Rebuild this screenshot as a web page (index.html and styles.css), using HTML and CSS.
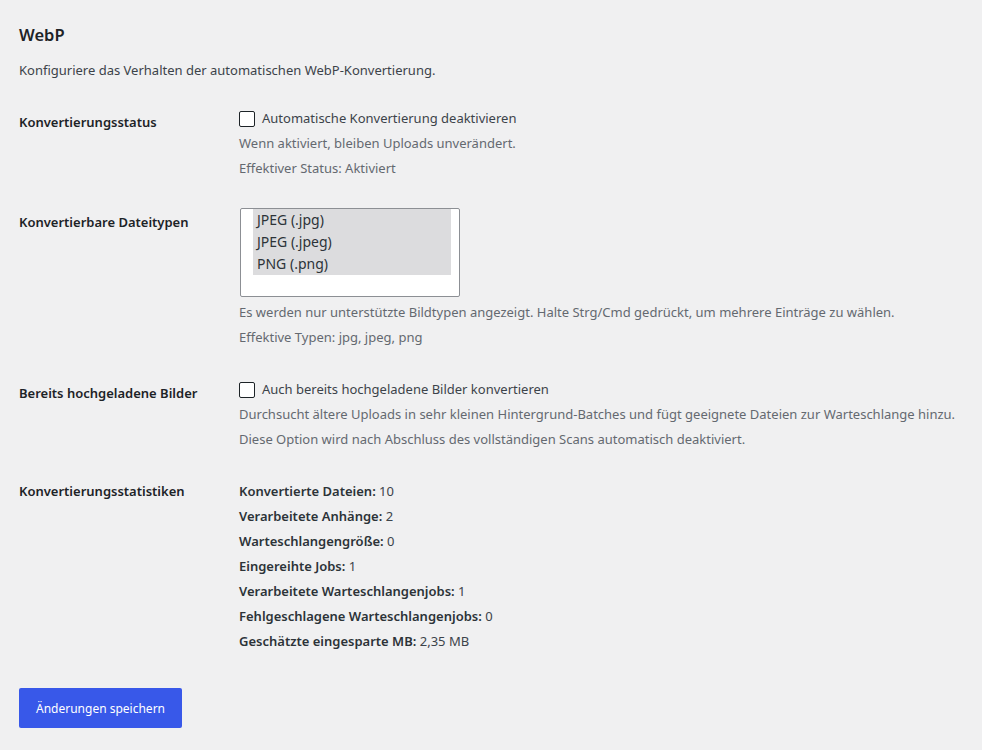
FILE: index.html
```html
<!DOCTYPE html>
<html lang="de">
<head>
    <meta charset="UTF-8">
    <meta name="viewport" content="width=device-width, initial-scale=1.0">
    <title>WebP Einstellungen</title>
    <link rel="stylesheet" href="styles.css">
</head>
<body>
    <div class="wrap">
        <h2>WebP</h2>
        <p class="intro">Konfiguriere das Verhalten der automatischen WebP-Konvertierung.</p>

        <form class="settings">
            <!-- Status -->
            <div class="row">
                <div class="label label-check">Konvertierungsstatus</div>
                <div class="field">
                    <label class="check"><input type="checkbox"> Automatische Konvertierung deaktivieren</label>
                    <p class="description">Wenn aktiviert, bleiben Uploads unverändert.</p>
                    <p class="description">Effektiver Status: Aktiviert</p>
                </div>
            </div>

            <!-- Dateitypen -->
            <div class="row">
                <div class="label label-select">Konvertierbare Dateitypen</div>
                <div class="field">
                    <div class="listbox" role="listbox" aria-multiselectable="true">
                        <div class="option selected" role="option">JPEG (.jpg)</div>
                        <div class="option selected" role="option">JPEG (.jpeg)</div>
                        <div class="option selected" role="option">PNG (.png)</div>
                    </div>
                    <p class="description">Es werden nur unterstützte Bildtypen angezeigt. Halte Strg/Cmd gedrückt, um mehrere Einträge zu wählen.</p>
                    <p class="description">Effektive Typen: jpg, jpeg, png</p>
                </div>
            </div>

            <!-- Bestehende Bilder -->
            <div class="row">
                <div class="label label-check">Bereits hochgeladene Bilder</div>
                <div class="field">
                    <label class="check"><input type="checkbox"> Auch bereits hochgeladene Bilder konvertieren</label>
                    <p class="description">Durchsucht ältere Uploads in sehr kleinen Hintergrund-Batches und fügt geeignete Dateien zur Warteschlange hinzu.</p>
                    <p class="description">Diese Option wird nach Abschluss des vollständigen Scans automatisch deaktiviert.</p>
                </div>
            </div>

            <!-- Statistiken -->
            <div class="row">
                <div class="label">Konvertierungsstatistiken</div>
                <div class="field stats">
                    <p><strong>Konvertierte Dateien:</strong> 10</p>
                    <p><strong>Verarbeitete Anhänge:</strong> 2</p>
                    <p><strong>Warteschlangengröße:</strong> 0</p>
                    <p><strong>Eingereihte Jobs:</strong> 1</p>
                    <p><strong>Verarbeitete Warteschlangenjobs:</strong> 1</p>
                    <p><strong>Fehlgeschlagene Warteschlangenjobs:</strong> 0</p>
                    <p><strong>Geschätzte eingesparte MB:</strong> 2,35 MB</p>
                </div>
            </div>

            <div class="submit">
                <button type="submit" class="button-primary">Änderungen speichern</button>
            </div>
        </form>
    </div>
</body>
</html>
```

FILE: styles.css
```css
* {
    margin: 0;
    padding: 0;
    box-sizing: border-box;
}

body {
    font-family: "Noto Sans", "Open Sans", sans-serif;
    font-size: 13px;
    background-color: #f0f0f1;
    color: #3c434a;
}

.wrap {
    padding: 24px 19px 0;
}

h2 {
    font-size: 16.5px;
    font-weight: 600;
    line-height: 22px;
    color: #1d2327;
}

.intro {
    line-height: 20px;
    margin-top: 14px;
    color: #3c434a;
}

.settings {
    margin-top: 13px;
}

.row {
    display: grid;
    grid-template-columns: 220px 1fr;
    padding: 13px 0 14px;
}

.label {
    font-weight: 600;
    color: #1d2327;
    line-height: 25px;
}

.label-check {
    padding-top: 4px;
}

.label-select {
    padding-top: 2px;
}

.field {
    line-height: 25px;
}

.check {
    display: flex;
    align-items: center;
    gap: 7px;
    color: #3c434a;
}

.check input {
    appearance: none;
    width: 16px;
    height: 16px;
    border: 1px solid #1d2327;
    border-radius: 2px;
    background-color: #fff;
    margin: 0;
}

.description {
    color: #646970;
}

.listbox {
    width: 220px;
    height: 89px;
    border: 1px solid #8c8f94;
    border-radius: 2px;
    background-color: #fff;
    padding: 0 8px 0 12px;
    margin-bottom: 3px;
    margin-left: 1px;
}

.option {
    font-size: 14px;
    line-height: 22px;
    padding-left: 4px;
    color: #2c3338;
}

.option.selected {
    background-color: #dcdcde;
}

.stats p {
    color: #3c434a;
}

.stats strong {
    font-weight: 600;
    color: #2c3338;
}

.submit {
    padding-top: 20px;
}

.button-primary {
    font-family: inherit;
    font-size: 12px;
    background-color: #3858e9;
    color: #fff;
    border: none;
    border-radius: 2px;
    height: 40px;
    padding: 0 17px;
    cursor: pointer;
}

.button-primary:hover {
    background-color: #2145e6;
}
```
